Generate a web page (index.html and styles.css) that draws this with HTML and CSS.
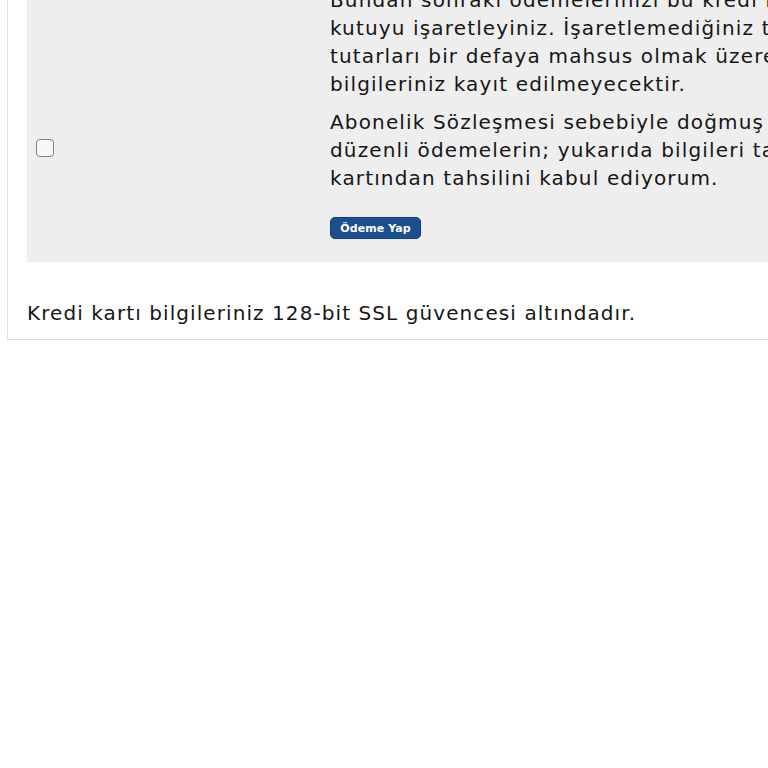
FILE: index.html
```html
<!DOCTYPE html>
<html lang="tr">
<head>
<meta charset="utf-8">
<title>Ödeme</title>
<link rel="stylesheet" href="styles.css">
</head>
<body>
<div class="frame">
  <div class="panel">
    <div class="row">
      <div class="cell-check"></div>
      <p class="text">Bundan sonraki ödemelerinizi bu kredi kartı ile yapmak istiyorsanız lütfen bu<br>kutuyu işaretleyiniz. İşaretlemediğiniz takdirde kredi kartınızdan sadece ödeme<br>tutarları bir defaya mahsus olmak üzere tahsil edilecek, kredi kartı<br>bilgileriniz kayıt edilmeyecektir.</p>
    </div>
    <div class="row">
      <div class="cell-check"><span class="checkbox"></span></div>
      <p class="text">Abonelik Sözleşmesi sebebiyle doğmuş ve doğacak olan tüm<br>düzenli ödemelerin; yukarıda bilgileri tanımlanan kredi<br>kartından tahsilini kabul ediyorum.</p>
    </div>
    <div class="row row-action">
      <div class="cell-check"></div>
      <div><button class="pay-btn" type="button">Ödeme Yap</button></div>
    </div>
  </div>
  <p class="note">Kredi kartı bilgileriniz 128-bit SSL güvencesi altındadır.</p>
</div>
</body>
</html>
```

FILE: styles.css
```css
html, body {
  margin: 0;
  padding: 0;
  background: #ffffff;
  overflow: hidden;
}

body {
  font-family: "DejaVu Sans", Verdana, sans-serif;
  font-size: 20px;
  line-height: 28px;
  letter-spacing: 1.15px;
  color: #161616;
}

.frame {
  width: 1100px;
  margin: -40px 0 0 7px;
  border: 1px solid #d3e2ef;
  padding: 0 19px 12px 19px;
  background: #ffffff;
}

.panel {
  background: #eeeeee;
  padding: 25px 0 23px 0;
  display: flex;
  flex-direction: column;
  gap: 10px;
}

.row {
  display: grid;
  grid-template-columns: 303px 1fr;
  align-items: center;
}

.row-action {
  margin-top: 15px;
}

.cell-check {
  padding-left: 9px;
  display: flex;
  align-items: center;
}

.checkbox {
  display: block;
  width: 16px;
  height: 16px;
  border: 1.5px solid #808080;
  border-radius: 4px;
  background: #f7f7f7;
  margin-bottom: 5px;
}

.text {
  margin: 0;
  white-space: nowrap;
}

.pay-btn {
  display: block;
  box-sizing: border-box;
  margin: 0;
  font-family: "DejaVu Sans", Verdana, sans-serif;
  font-weight: bold;
  font-size: 11px;
  line-height: 14px;
  letter-spacing: 0.1px;
  white-space: nowrap;
  color: #ffffff;
  background: #1b4f8d;
  border: 1px solid #163f72;
  border-radius: 5px;
  padding: 3px 0 2px 0;
  width: 91px;
  height: 22px;
  text-align: center;
  box-shadow: 0 0 1px rgba(0,0,0,0.2);
}

.note {
  margin: 37px 0 0 0;
  white-space: nowrap;
  letter-spacing: 1.08px;
}
```
